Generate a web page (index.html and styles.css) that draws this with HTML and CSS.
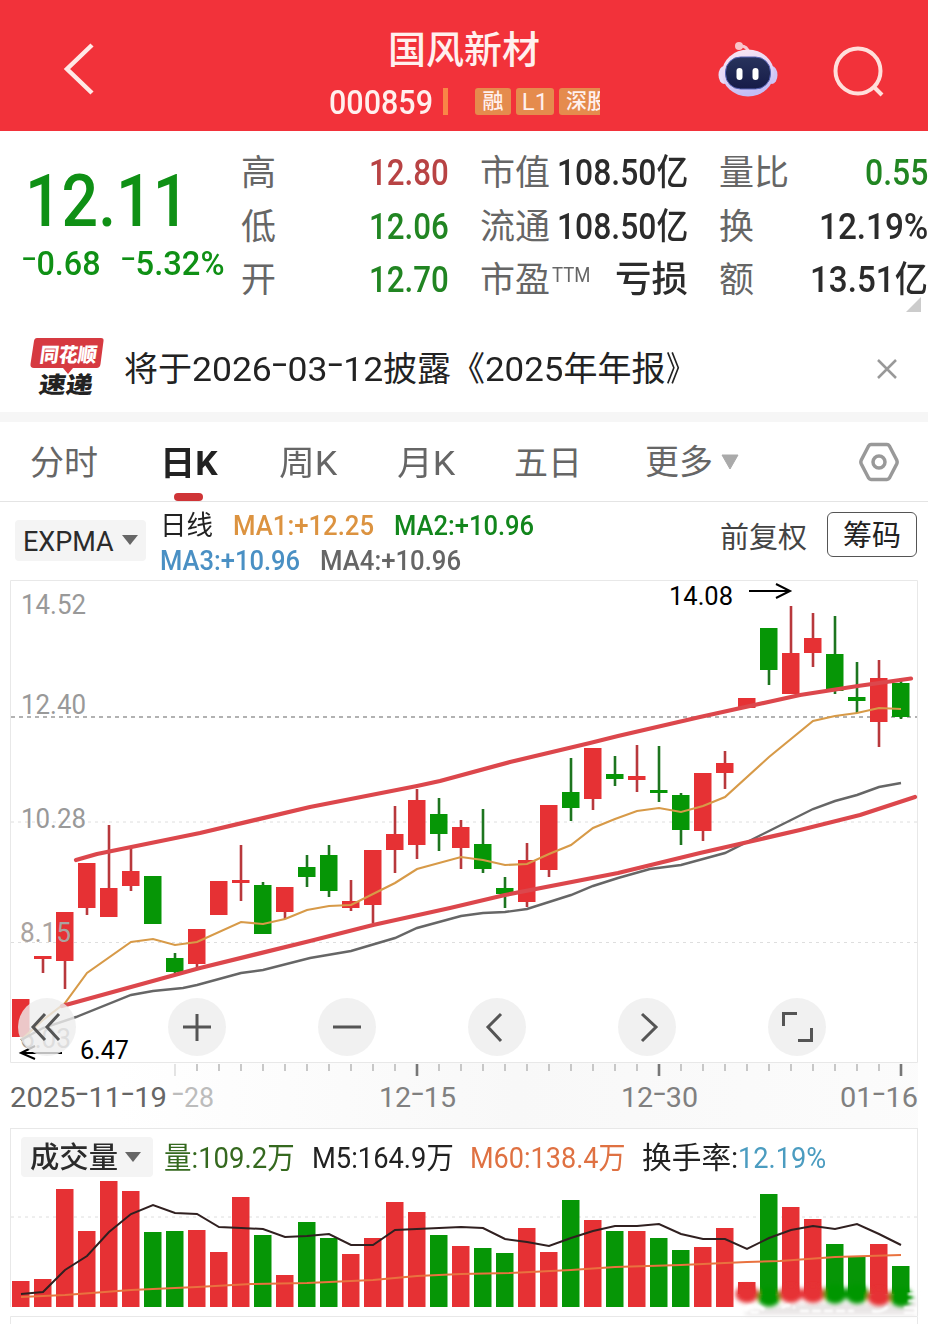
FILE: index.html
```html
<!DOCTYPE html>
<html lang="zh-CN">
<head>
<meta charset="utf-8">
<title>国风新材 000859</title>
<link rel="stylesheet" href="styles.css">
</head>
<body>
<header class="topbar">
  <svg class="back" width="34" height="56" viewBox="0 0 34 56"><path d="M30 4 5 28l25 24"/></svg>
  <div class="heading">
    <h1><span class="fit" data-w="152">国风新材</span></h1>
    <div class="sub">
      <span class="fit code" data-w="104">000859</span><i class="bar"></i>
      <div class="tags"><span class="tag t1">融</span><span class="tag t2">L1</span><span class="tag t3">深股</span></div>
    </div>
  </div>
  <svg class="robot" width="60" height="56" viewBox="0 0 60 56">
    <defs><linearGradient id="shell" x1="0" y1="0" x2=".3" y2="1"><stop offset="0" stop-color="#fbe9f2"/><stop offset=".55" stop-color="#e6d6f5"/><stop offset="1" stop-color="#c3bdf5"/></linearGradient>
    <linearGradient id="face" x1="0" y1="0" x2="0" y2="1"><stop offset="0" stop-color="#28335c"/><stop offset="1" stop-color="#161b48"/></linearGradient></defs>
    <path d="M21 4q8-1 10 7" fill="none" stroke="#f8c9d2" stroke-width="3"/><circle cx="21" cy="4" r="4" fill="#f9c4c9"/>
    <ellipse cx="6" cy="33" rx="5.5" ry="9" fill="#e9dcf6"/><ellipse cx="54" cy="33" rx="5.5" ry="9" fill="#cfc5f5"/>
    <ellipse cx="30" cy="31" rx="26" ry="23.500" fill="url(#shell)"/>
    <rect x="7.500" y="15" width="45" height="32" rx="15" fill="url(#face)" stroke="#5865b5" stroke-width="1"/>
    <rect x="18.500" y="26" width="6" height="12" rx="3" fill="#fff"/><rect x="34.500" y="26" width="6" height="12" rx="3" fill="#fff"/>
  </svg>
  <svg class="search" width="52" height="52" viewBox="0 0 52 52"><circle cx="25" cy="25" r="22.500"/><path d="m41 41 8 8"/></svg>
</header>

<section class="quote">
  <div class="last">
    <div class="price"><span class="fit" data-w="164">12.11</span></div>
    <div class="delta"><span class="fit" data-w="79"><i class="dash">-</i>0.68</span><span class="fit" data-w="104"><i class="dash">-</i>5.32%</span></div>
  </div>
  <div class="stats">
    <div class="stat"><label>高</label><b class="up fit" data-w="80">12.80</b></div>
    <div class="stat"><label>市值</label><b class="fit" data-w="131">108.50亿</b></div>
    <div class="stat"><label>量比</label><b class="down fit" data-w="63">0.55</b></div>
    <div class="stat"><label>低</label><b class="down fit" data-w="80">12.06</b></div>
    <div class="stat"><label>流通</label><b class="fit" data-w="131">108.50亿</b></div>
    <div class="stat"><label>换</label><b class="fit" data-w="109">12.19%</b></div>
    <div class="stat"><label>开</label><b class="down fit" data-w="80">12.70</b></div>
    <div class="stat"><label>市盈<sup class="fit" data-w="38">TTM</sup></label><b class="fit" data-w="73">亏损</b></div>
    <div class="stat"><label>额</label><b class="fit" data-w="118">13.51亿</b></div>
  </div>
  <i class="corner"></i>
</section>

<section class="news">
  <svg class="logo" width="76" height="64" viewBox="0 0 76 64">
    <path d="M7 2h64q3 0 2.500 3l-3 23q-.5 4-4 4H43l-5 6-5-6H4q-4 0-3.500-4L4 5q.5-3 3-3z" fill="#d63a41"/>
    <text transform="translate(9 26) skewX(-8)" textLength="57" lengthAdjust="spacingAndGlyphs" class="logo-a">同花顺</text>
    <text transform="translate(8 57) skewX(-8)" textLength="54" lengthAdjust="spacingAndGlyphs" class="logo-b">速递</text>
  </svg>
  <p><span class="fit" data-w="68">将于</span><span class="fit" data-w="191">2026<i class="dash">-</i>03<i class="dash">-</i>12</span><span class="fit" data-w="68">披露</span><span class="fit book" data-w="34">《</span><span class="fit" data-w="78">2025</span><span class="fit" data-w="102">年年报</span><span class="fit" data-w="28">》</span></p>
  <svg class="close" width="22" height="22" viewBox="0 0 22 22"><path d="m2 2 18 18M20 2 2 20"/></svg>
</section>

<nav class="tabs">
  <span class="tab k1"><span class="fit" data-w="68">分时</span></span>
  <span class="tab k2 active"><span class="fit" data-w="58">日K</span></span>
  <span class="tab k3"><span class="fit" data-w="58">周K</span></span>
  <span class="tab k4"><span class="fit" data-w="58">月K</span></span>
  <span class="tab k5"><span class="fit" data-w="68">五日</span></span>
  <span class="tab k6"><span class="fit" data-w="68">更多</span><svg width="18" height="16" viewBox="0 0 18 16"><path d="M1 1h16L9 15z" fill="#aaa" stroke="#aaa" stroke-linejoin="round"/></svg></span>
  <svg class="gear" width="40" height="40" viewBox="0 0 40 40"><path d="M12 2.500h16q1.500 0 2.300 1.300l7.500 14.500q.7 1.700 0 3.400l-7.500 14.500q-.8 1.300-2.300 1.300H12q-1.500 0-2.300-1.300L2.200 21.700q-.7-1.700 0-3.400L9.700 3.800Q10.500 2.500 12 2.500z"/><circle cx="20" cy="20" r="6"/></svg>
</nav>

<section class="indicators">
  <div class="pick expma"><span class="fit" data-w="91">EXPMA</span><i class="caret"></i></div>
  <div class="ma">
    <div><span class="fit ink" data-w="53">日线</span><span class="fit m1" data-w="141">MA1:+12.25</span><span class="fit m2" data-w="140">MA2:+10.96</span></div>
    <div><span class="fit m3" data-w="140">MA3:+10.96</span><span class="fit m4" data-w="141">MA4:+10.96</span></div>
  </div>
  <span class="adjust"><span class="fit" data-w="87">前复权</span></span>
  <span class="chips"><span class="fit" data-w="58">筹码</span></span>
</section>

<section class="kline">
  <svg id="kchart" width="928" height="548" viewBox="0 580 928 548">
    <defs><linearGradient id="fade"><stop offset="0" stop-color="#fff"/><stop offset=".5" stop-color="#f5f5f5"/><stop offset="1" stop-color="#fafafa"/></linearGradient></defs>
    <rect x="115" y="1063" width="803" height="65" fill="url(#fade)" opacity=".7"/>
    <path class="frame" d="M10.500 580.500H917.500V1062.500H10.500z"/>
    <path class="grid" d="M11 822H917M11 942.500H917"/>
    <path class="now" d="M11 717H917"/>
    <g class="scale"><text x="21" y="614" textLength="65">14.52</text><text x="21" y="714" textLength="65">12.40</text><text x="21" y="828" textLength="65">10.28</text><text x="20" y="1048" textLength="51">6.03</text></g>
    <g id="candles"></g>
    <g class="scale over"><text x="20" y="942" textLength="51">8.15</text></g>
    <polyline class="l-ma1" points="21,1040 43,1020 65,1003 87,973 131,942 153,939 175,945 197,942 241,922 263,924 285,919 307,910 329,906 351,905 373,894 395,883 417,869 461,857 483,860 505,865 527,864 549,854 571,845 593,828 615,819 637,811 659,808 681,812 703,806 725,797 769,757 813,721 835,716 857,713 879,708 901,709"/>
    <polyline class="l-ma4" points="21,1040 43,1028 76,1017 131,995 153,991 183,988 197,985 241,973 263,970 310,958 351,951 395,938 417,928 461,916 483,913 505,912 527,909 549,902 571,895 593,886 618,878 650,869 681,865 725,853 769,831 813,809 835,801 857,795 879,787 901,783"/>
    <path class="trend" d="M76 860 97 854 200 833 310 807 417 786 440 781 510 762 590 743 618 736 700 717 800 695Q855 686 911 678.500"/>
    <path class="trend" d="M62 1006 200 968 310 941 373 925 450 908 505 895 618 873 700 853 800 830 860 815 915 797"/>
    <g id="ticks"></g>
    <g class="mark"><text x="669" y="605" textLength="64">14.08</text><path d="M749 591H789M776 584l14 7-14 7"/><text x="80" y="1059" textLength="49">6.47</text><path d="M62 1053H23M35 1046l-14 7 14 6"/></g>
    <g class="dates"><text x="10" y="1107" class="first" textLength="157">2025<tspan class="dash">-</tspan>11<tspan class="dash">-</tspan>19</text><text x="172" y="1107" class="faint" textLength="42"><tspan class="dash">-</tspan>28</text><text x="379" y="1107" textLength="77">12<tspan class="dash">-</tspan>15</text><text x="621" y="1107" textLength="77">12<tspan class="dash">-</tspan>30</text><text x="840" y="1107" textLength="78">01<tspan class="dash">-</tspan>16</text></g>
  </svg>
  <div class="tools">
    <svg viewBox="0 0 58 58"><path d="M27 16 15 29l12 13M41 16 29 29l12 13"/></svg>
    <svg viewBox="0 0 58 58"><path d="M15 29h28M29 16v27"/></svg>
    <svg viewBox="0 0 58 58"><path d="M15 29h28"/></svg>
    <svg viewBox="0 0 58 58"><path d="M33 16 20 29l13 14"/></svg>
    <svg viewBox="0 0 58 58"><path d="m24 16 14 13-14 14"/></svg>
    <svg viewBox="0 0 58 58"><path d="M15.500 28V15.500H29M43.500 30V42.500H30"/></svg>
  </div>
</section>

<section class="volume">
  <div class="vhead">
    <div class="pick vol"><span class="fit" data-w="88">成交量</span><i class="caret"></i></div>
    <span class="fit v1" data-w="131">量:109.2万</span><span class="fit v2" data-w="142">M5:164.9万</span><span class="fit v3" data-w="156">M60:138.4万</span><span class="fit v4" data-w="96">换手率:</span><span class="fit v5" data-w="88">12.19%</span>
  </div>
  <svg id="vchart" width="928" height="145" viewBox="0 1179 928 145">
    <defs><filter id="soft" x="-10%" y="-40%" width="120%" height="180%"><feGaussianBlur stdDeviation="2"/></filter><filter id="haze"><feGaussianBlur stdDeviation=".8"/></filter></defs>
    <path class="grid" d="M11 1217H917"/>
    <g id="bars"></g>
    <path filter="url(#soft)" d="M745 1312Q800 1300 860 1303T916 1292V1315H745z" fill="#e9e6e6"/>
    <g filter="url(#soft)" id="smudge"></g>
    <g filter="url(#haze)" fill="none" stroke="#fff" stroke-width="2.500"><path d="M745 1309q8-6 18 0-7 7-18 0M782 1308q5-5 13 0M800 1311h54" stroke-dasharray="9 3"/><path d="M872 1311q9 2 16-4M908 1294h8M908 1301h8M904 1308h12v5H904"/></g>
    <polyline class="l-m5" points="21,1294 43,1292 65,1270 87,1256 109,1232 131,1214 153,1205 175,1213 197,1214 219,1227 241,1228 263,1229 285,1237 307,1236 329,1234 351,1245 373,1245 395,1230 439,1228 461,1227 483,1228 505,1239 527,1242 549,1246 571,1238 593,1231 615,1226 637,1226 659,1224 681,1234 703,1239 725,1239 747,1249 769,1238 791,1230 813,1226 835,1229 857,1224 879,1234 901,1245"/>
    <polyline class="l-m60" points="21,1297 65,1295 131,1290 197,1287 251,1284 307,1283 373,1280 417,1276 461,1274 510,1273 571,1270 615,1267 681,1265 747,1262 780,1261 835,1257 901,1255"/>
    <path class="frame" d="M10.500 1179V1307M917.500 1179V1316M10.500 1324V1316.500H917.500V1324"/>
  </svg>
</section>
<script src="app.js"></script>
</body>
</html>
```

FILE: styles.css
```css
* { box-sizing: border-box; }
body { margin: 0; width: 928px; height: 1324px; overflow: hidden; background: #fff; color: #2b2b2b; font-family: Roboto, "Noto Sans CJK SC", sans-serif; }
svg { display: block; flex: none; }
.fit { display: inline-block; white-space: nowrap; transform-origin: 0 50%; flex: none; }
.dash { font-style: normal; font-weight: 300; font-size: 1.55em; line-height: 0; }

.topbar { height: 131px; display: flex; background: #f2323a; color: #fff0ee; }
.back { margin: 41px 0 0 62px; }
.back path { fill: none; stroke: #ffe9e6; stroke-width: 4.5; }
.heading { width: 272px; margin-left: 232px; }
h1 { margin: 22px 0 0 60px; font-size: 38px; line-height: 56px; font-weight: 500; height: 56px; }
.sub { display: flex; align-items: center; height: 47px; }
.code { font-size: 34px; line-height: 47px; margin-left: 1px; padding-top: 2px; font-weight: 500; }
.bar { width: 5px; height: 27px; background: #f98646; margin-left: 10px; }
.tags { display: flex; gap: 5px; width: 125px; overflow: hidden; margin-left: 27px; }
.tag { flex: none; height: 27px; line-height: 26px; border-radius: 3px; background: #e58b4d; font-size: 21px; font-weight: 500; text-align: center; white-space: nowrap; overflow: hidden; }
.t1 { width: 36px; }
.t2 { width: 38px; font-size: 24px; font-weight: 400; line-height: 28px; }
.t3 { width: 90px; text-align: left; padding-left: 7px; }
.robot { margin: 42px 0 0 118px; }
.search { margin: 46px 0 0 55px; }
.search * { fill: none; stroke: #ffdfdb; stroke-width: 4; }

.quote { position: relative; height: 191px; display: flex; padding-top: 14px; }
.last { width: 241px; padding-left: 22px; color: #0f9015; font-weight: 500; }
.price { font-size: 73px; line-height: 86px; height: 86px; padding: 13px 0 0 3px; }
.delta { display: flex; gap: 20px; font-size: 34px; line-height: 44px; margin-top: 10px; }
.stats { display: grid; grid-template-columns: 208px 208px 209px; column-gap: 31px; grid-auto-rows: 53.5px; padding-top: 2px; }
.stat { display: flex; justify-content: space-between; font-size: 36px; line-height: 53.5px; white-space: nowrap; }
.stat label { font-size: 35px; color: #666; }
.stat b { font-weight: 500; }
.stat sup { font-size: 20px; line-height: 20px; vertical-align: 10px; margin-left: 2px; }
.stat .up { color: #b84344; }
.stat .down { color: #218522; }
.corner { position: absolute; right: 7px; top: 166px; border-style: solid; border-width: 0 0 15px 15px; border-color: transparent transparent #ccc; }

.news { height: 100px; display: flex; align-items: center; border-bottom: 10px solid #f6f6f6; }
.logo { margin: 14px 0 0 30px; align-self: flex-start; }
.logo-a { font: 900 20px "Noto Sans CJK SC", sans-serif; fill: #fff; }
.logo-b { font: 900 23px "Noto Sans CJK SC", sans-serif; fill: #222; }
.news p { margin: 4px 0 0 18px; width: 752px; display: flex; font-size: 34px; line-height: 50px; color: #222; white-space: nowrap; }
.close { margin-top: 3px; }
.close path { stroke: #999; stroke-width: 2.5; fill: none; }

.tabs { display: flex; height: 80px; border-bottom: 1px solid #e4e4e4; font-size: 34px; line-height: 82px; color: #666; }
.tab { height: 79px; white-space: nowrap; }
.k1 { width: 130px; padding-left: 30px; }
.k2 { width: 149px; padding-left: 30px; font-weight: 700; color: #222; position: relative; }
.k2::after { content: ""; position: absolute; left: 44px; bottom: 0; width: 29px; height: 8px; border-radius: 4px; background: #cf3437; }
.k3 { width: 118px; }
.k4 { width: 117px; }
.k5 { width: 131px; }
.k6 { width: 214px; display: flex; align-items: center; gap: 8px; }
.gear { margin-top: 20px; }
.gear * { fill: none; stroke: #999; stroke-width: 3.5; }

.indicators { display: flex; height: 78px; }
.pick { display: flex; align-items: center; background: #f4f4f4; border-radius: 4px; }
.caret { border: solid transparent; border-width: 10px 8px 0; border-top-color: #666; }
.expma { width: 131px; height: 41px; margin: 18px 0 0 15px; padding: 3px 0 0 8px; gap: 8px; font-size: 27px; }
.expma .caret { margin-top: -4px; }
.ma { width: 573px; padding-left: 14px; margin-top: 7px; font-size: 27px; line-height: 35px; }
.ma > div { display: flex; gap: 20px; height: 35px; }
.ma .fit { font-weight: 500; }
.ma .ink { color: #222; font-weight: 400; }
.m1 { color: #dc9340; }
.m2 { color: #12861c; }
.m3 { color: #4a90c4; }
.m4 { color: #666; }
.adjust { width: 108px; padding-left: 1px; font-size: 29px; line-height: 72px; color: #444; }
.chips { width: 90px; height: 45px; margin-top: 10px; border: 1px solid #555; border-radius: 6px; padding-left: 15px; font-size: 29px; line-height: 46px; color: #222; }

.kline { position: relative; height: 548px; }
.tools { position: absolute; left: 18px; top: 418px; display: flex; gap: 92px; }
.tools svg { width: 58px; height: 58px; border-radius: 50%; background: rgba(238, 238, 238, .8); }
.tools path { fill: none; stroke: #555; stroke-width: 3; }
.frame { fill: none; stroke: #e8e8e8; }
.grid { fill: none; stroke: #dedede; stroke-dasharray: 3 4; }
.now { fill: none; stroke: #999; stroke-width: 1.3; stroke-dasharray: 4 4; }
text { font-family: Roboto, "Noto Sans CJK SC", sans-serif; }
.scale text { font-size: 28px; fill: #999; }
.over text { fill: #aaa3a0; }
.mark text { font-size: 26px; fill: #000; }
.mark path { fill: none; stroke: #000; stroke-width: 2; }
.dates text { font-size: 28px; fill: #808080; }
.dates .first { fill: #666; }
.dates .faint { fill: #bcbcbc; }
.trend { fill: none; stroke: #dc474c; stroke-width: 4.2; stroke-linecap: round; stroke-linejoin: round; }
.l-ma1 { fill: none; stroke: #d79a48; stroke-width: 2.1; }
.l-ma4 { fill: none; stroke: #666; stroke-width: 2.4; }
.l-m5 { fill: none; stroke: #302020; stroke-width: 2; }
.l-m60 { fill: none; stroke: #e9723f; stroke-width: 2; }
.r { fill: #e63134; }
.g { fill: #069606; }
.wick.r { stroke: #b8383c; stroke-width: 2.6; }
.wick.g { stroke: #1d751f; stroke-width: 2.6; }

.volume { height: 196px; }
.vhead { height: 51px; margin: 0 10px; border: solid #e8e8e8; border-width: 1px 1px 0; display: flex; font-size: 30px; line-height: 57px; white-space: nowrap; }
.vol { width: 132px; height: 40px; margin: 8px 0 0 10px; padding: 2px 0 0 9px; gap: 7px; line-height: 40px; font-size: 29px; font-weight: 500; }
.vol .caret { margin-top: -3px; }
.v1 { margin-left: 11px; color: #35691f; }
.v2 { margin-left: 17px; color: #222; }
.v3 { margin-left: 17px; color: #df7142; }
.v4 { margin-left: 16px; color: #222; }
.v5 { color: #4b9cc0; }
```

FILE: app.js
```js
// Stretch each label to its column width.
document.querySelectorAll('.fit').forEach(el => {
  const w = +el.dataset.w, n = el.offsetWidth;
  el.style.transform = `scaleX(${w / n})`;
  el.style.marginRight = `${w - n}px`;
});
document.querySelectorAll('svg text[textLength]').forEach(t => t.setAttribute('lengthAdjust', 'spacingAndGlyphs'));

// colour, high, body top, body bottom, low, volume top
const days = [
  'r 999 999 1037 1037 1281', 'r 956 956 959 973 1279', 'r 912 912 961 989 1189', 'r 863 863 908 915 1231',
  'r 825 888 917 917 1181', 'r 847 871 886 891 1191', 'g 876 876 924 924 1232', 'g 953 958 972 973 1231',
  'r 929 929 964 970 1230', 'r 881 881 915 915 1252', 'r 845 880 883 901 1197', 'g 882 885 934 934 1235',
  'r 887 887 912 919 1275', 'g 855 867 877 887 1222', 'g 845 855 891 897 1238', 'r 880 901 908 911 1254',
  'r 850 850 905 923 1238', 'r 806 834 850 873 1202', 'r 789 800 845 859 1212', 'g 798 814 834 851 1235',
  'r 820 827 848 869 1246', 'g 809 844 869 873 1248', 'g 877 888 894 908 1253', 'r 843 860 902 907 1228',
  'r 805 805 870 877 1252', 'g 758 792 808 821 1200', 'r 748 748 799 810 1220', 'g 756 774 779 786 1231',
  'r 745 776 780 792 1231', 'g 746 790 793 802 1238', 'g 793 795 830 845 1250', 'r 773 773 831 841 1247',
  'r 751 763 773 789 1228', 'r 698 698 708 708 1282', 'g 628 628 670 685 1194', 'r 606 653 694 694 1207',
  'r 613 638 653 667 1219', 'g 616 654 691 694 1244', 'g 662 697 701 713 1257', 'r 660 678 722 747 1244',
  'g 678 683 717 719 1266'
];
let candles = '', bars = '', ticks = '', smudge = '';
days.forEach((d, i) => {
  const [c, ...v] = d.split(' ');
  const [hi, top, bot, lo, vol] = v.map(Number);
  const x = 21 + 22 * i;
  candles += `<path class="wick ${c}" d="M${x} ${hi}V${lo}"/><rect class="${c}" x="${x - 9}" y="${top}" width="17.500" height="${bot - top}"/>`;
  const floor = i > 32 ? 1294 : 1307;
  bars += `<rect class="${c}" x="${x - 9}" y="${vol}" width="17.500" height="${floor - vol}"/>`;
  if (i > 32) smudge += `<ellipse class="${c}" cx="${x}" cy="${[34, 39, 40].includes(i) ? 1297 : 1294}" rx="11.500" ry="${c === 'g' ? 10 : 9}"/>`;
  if (i > 6) {
    const major = (i - 7) % 11 === 0;
    ticks += `<path d="M${x} 1064v${major ? 12 : 7}" stroke="${i === 7 ? '#ddd' : major ? '#777' : '#bbb'}" stroke-width="${major && i > 7 ? 2.6 : 1.6}"/>`;
  }
});
document.getElementById('candles').innerHTML = candles;
document.getElementById('bars').innerHTML = bars;
document.getElementById('ticks').innerHTML = ticks;
document.getElementById('smudge').innerHTML = smudge;
```
